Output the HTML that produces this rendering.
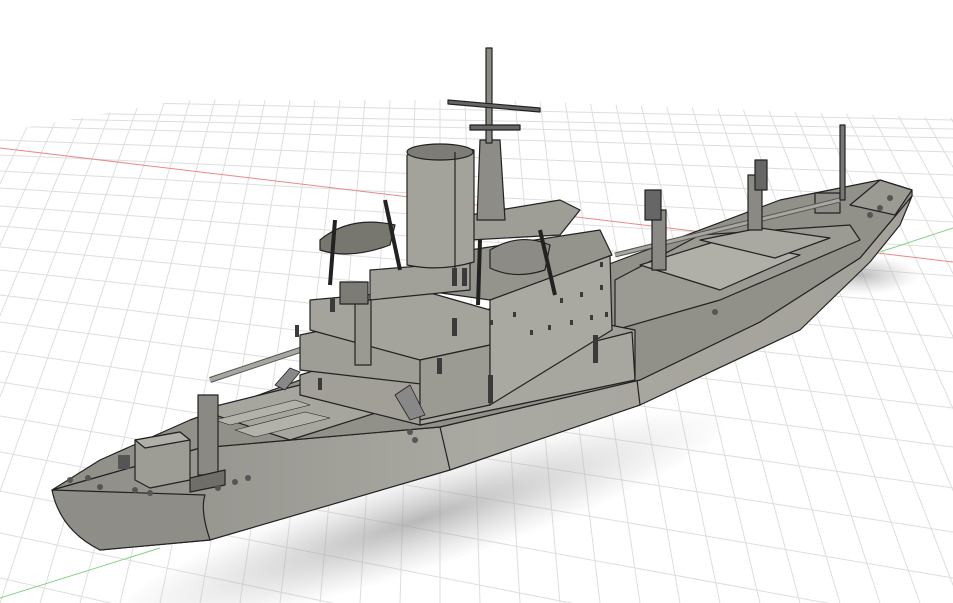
<!DOCTYPE html>
<html><head><meta charset="utf-8"><style>html,body{margin:0;padding:0;background:#fff;overflow:hidden;width:953px;height:603px}svg{display:block}</style></head><body>
<svg width="953" height="603" viewBox="0 0 953 603" xmlns="http://www.w3.org/2000/svg">
<defs>
<clipPath id="g"><polygon points="0,132 240,90 953,118 953,603 0,603"/></clipPath>
<radialGradient id="sh" cx="0.5" cy="0.5" r="0.5"><stop offset="0" stop-color="#9a9a9a" stop-opacity="0.7"/><stop offset="1" stop-color="#bbb" stop-opacity="0"/></radialGradient>
<linearGradient id="hull" x1="0" y1="0" x2="1" y2="0"><stop offset="0" stop-color="#8d8c86"/><stop offset="0.5" stop-color="#aaa9a2"/><stop offset="1" stop-color="#a3a19a"/></linearGradient>
</defs>
<g clip-path="url(#g)" stroke="#dedede" stroke-width="1">
<g>
<line x1="0" y1="140" x2="953" y2="175"/><line x1="0" y1="155" x2="953" y2="198"/><line x1="0" y1="171" x2="953" y2="222"/><line x1="0" y1="188" x2="953" y2="248"/>
<line x1="0" y1="206" x2="953" y2="276"/><line x1="0" y1="226" x2="953" y2="306"/><line x1="0" y1="247" x2="953" y2="338"/><line x1="0" y1="270" x2="953" y2="372"/>
<line x1="0" y1="295" x2="953" y2="408"/><line x1="0" y1="322" x2="953" y2="447"/><line x1="0" y1="351" x2="953" y2="488"/><line x1="0" y1="382" x2="953" y2="532"/>
<line x1="0" y1="416" x2="953" y2="578"/><line x1="0" y1="452" x2="953" y2="626"/><line x1="0" y1="491" x2="953" y2="678"/><line x1="0" y1="533" x2="953" y2="734"/><line x1="0" y1="578" x2="953" y2="794"/>
<line x1="0" y1="118" x2="953" y2="138"/><line x1="0" y1="126" x2="953" y2="152"/><line x1="0" y1="100" x2="953" y2="120"/><line x1="0" y1="112" x2="953" y2="129"/>
</g>
<g>
<line x1="-200" y1="603" x2="40" y2="100"/><line x1="-120" y1="603" x2="90" y2="100"/><line x1="-40" y1="603" x2="140" y2="100"/><line x1="40" y1="603" x2="190" y2="100"/>
<line x1="120" y1="603" x2="240" y2="100"/><line x1="200" y1="603" x2="290" y2="100"/><line x1="280" y1="603" x2="340" y2="100"/><line x1="360" y1="603" x2="390" y2="100"/>
<line x1="440" y1="603" x2="440" y2="100"/><line x1="520" y1="603" x2="490" y2="100"/><line x1="600" y1="603" x2="540" y2="100"/><line x1="680" y1="603" x2="590" y2="100"/>
<line x1="760" y1="603" x2="640" y2="100"/><line x1="840" y1="603" x2="690" y2="100"/><line x1="920" y1="603" x2="740" y2="100"/><line x1="1000" y1="603" x2="790" y2="100"/>
<line x1="1080" y1="603" x2="840" y2="100"/><line x1="1160" y1="603" x2="890" y2="100"/><line x1="1240" y1="603" x2="940" y2="100"/>
<line x1="-160" y1="603" x2="65" y2="100"/><line x1="-80" y1="603" x2="115" y2="100"/><line x1="0" y1="603" x2="165" y2="100"/><line x1="80" y1="603" x2="215" y2="100"/>
<line x1="160" y1="603" x2="265" y2="100"/><line x1="240" y1="603" x2="315" y2="100"/><line x1="320" y1="603" x2="365" y2="100"/><line x1="400" y1="603" x2="415" y2="100"/>
<line x1="480" y1="603" x2="465" y2="100"/><line x1="560" y1="603" x2="515" y2="100"/><line x1="640" y1="603" x2="565" y2="100"/><line x1="720" y1="603" x2="615" y2="100"/>
<line x1="800" y1="603" x2="665" y2="100"/><line x1="880" y1="603" x2="715" y2="100"/><line x1="960" y1="603" x2="765" y2="100"/><line x1="1040" y1="603" x2="815" y2="100"/><line x1="1120" y1="603" x2="865" y2="100"/><line x1="1200" y1="603" x2="915" y2="100"/>
</g>
</g>
<line x1="0" y1="148" x2="953" y2="262" stroke="#e88a8a" stroke-width="1"/>
<line x1="0" y1="598" x2="160" y2="548" stroke="#8ad08a" stroke-width="1"/>
<line x1="880" y1="252" x2="953" y2="228" stroke="#8ad08a" stroke-width="1"/>
<ellipse cx="420" cy="520" rx="330" ry="50" fill="url(#sh)" transform="rotate(-18 420 520)"/>
<ellipse cx="860" cy="275" rx="60" ry="20" fill="url(#sh)"/>
<g stroke="#222" stroke-width="1.2" stroke-linejoin="round">
<polygon points="52,490 200,448 440,427 640,380 760,322 860,258 912,196 900,225 870,262 800,330 640,405 450,470 210,540 100,550 65,520" fill="url(#hull)"/>
<path d="M52,490 Q60,530 100,550 L210,540 Q200,510 205,495 Z" fill="#8e8d87"/>
<line x1="440" y1="427" x2="450" y2="470"/><line x1="637" y1="380" x2="640" y2="405"/>
<polygon points="52,490 100,460 190,420 300,380 620,260 780,200 880,180 912,190 912,196 860,258 760,322 640,380 440,427 200,448" fill="#929189"/>
<polygon points="880,180 912,190 895,215 850,205" fill="#9b9a93"/>
<polygon points="200,410 300,385 385,410 290,440" fill="#a6a59e"/>
<polygon points="215,420 295,400 310,405 230,425" fill="#b2b1aa" stroke-width="0.6"/>
<polygon points="235,430 305,412 330,418 255,437" fill="#b2b1aa" stroke-width="0.6"/>
<polygon points="135,440 180,432 190,440 190,480 150,488 135,480" fill="#9d9c95"/>
<polygon points="135,440 180,432 190,440 145,448" fill="#b0afa8"/>
<rect x="198" y="395" width="20" height="80" fill="#8a8983"/>
<polygon points="190,478 225,470 225,485 190,492" fill="#6f6e68"/>
<path d="M210,380 L360,330" stroke-width="6" stroke="#555"/>
<path d="M210,380 L360,330" stroke-width="4" stroke="#a7a69f"/>
<polygon points="615,280 700,235 850,225 860,240 720,300 615,330" fill="#9b9a93"/>
<polygon points="640,265 720,240 800,255 720,290" fill="#b0afa8"/>
<polygon points="700,240 760,228 830,238 775,258" fill="#a9a8a1"/>
<rect x="815" y="193" width="25" height="20" fill="#8f8e88"/>
<path d="M615,255 L840,200" stroke="#555" stroke-width="5"/><path d="M615,255 L840,200" stroke="#a7a69f" stroke-width="3"/>
<rect x="652" y="210" width="14" height="60" fill="#8a8983"/>
<rect x="748" y="175" width="14" height="55" fill="#8a8983"/>
<rect x="755" y="160" width="12" height="30" fill="#666"/>
<rect x="645" y="190" width="16" height="30" fill="#666"/>
<rect x="840" y="125" width="5" height="75" fill="#777"/>
<polygon points="300,375 380,350 560,355 610,325 635,330 635,380 420,425 300,395" fill="#a19f98"/>
<polygon points="420,385 632,332 635,380 420,425" fill="#a8a79f"/>
<polygon points="300,335 380,318 430,345 430,385 300,370" fill="#9e9d96"/>
<polygon points="310,300 420,290 490,310 490,345 420,360 310,330" fill="#a5a49c"/>
<polygon points="420,360 490,345 490,405 420,420" fill="#9b9a93"/>
<polygon points="490,300 610,255 612,330 490,405" fill="#a9a8a1"/>
<polygon points="470,250 600,230 612,255 490,300 420,290" fill="#94938c"/>
<polygon points="370,270 470,262 470,290 370,300" fill="#a2a199"/>
<polygon points="470,215 560,200 580,210 560,235 470,240" fill="#9e9d96"/>
<path d="M407,155 Q440,142 474,150 L474,262 Q440,272 407,265 Z" fill="#a4a39b"/>
<ellipse cx="440" cy="152" rx="33" ry="8" fill="#7d7c76"/>
<line x1="455" y1="152" x2="455" y2="268"/>
<polygon points="480,140 500,140 505,220 477,220" fill="#8d8c86"/>
<rect x="486" y="48" width="6" height="95" fill="#8a8983"/>
<polygon points="448,100 540,108 540,112 448,104" fill="#666"/>
<rect x="470" y="125" width="50" height="5" fill="#666"/>
<path d="M320,240 Q350,215 395,225 L390,245 Q350,260 320,250 Z" fill="#77766f"/>
<path d="M490,250 Q520,232 550,245 L545,270 Q515,280 490,268 Z" fill="#8c8b85"/>
<path d="M335,220 L330,285 M385,200 L400,270 M480,240 L478,305 M540,230 L555,295" stroke-width="4"/>
<g fill="#3a3a3a" stroke="none">
<rect x="452" y="268" width="5" height="18"/><rect x="462" y="268" width="5" height="18"/>
<rect x="452" y="318" width="5" height="18"/><rect x="330" y="298" width="5" height="14"/><rect x="437" y="358" width="5" height="16"/>
<rect x="488" y="375" width="5" height="28"/><rect x="593" y="335" width="5" height="28"/>
<rect x="490" y="320" width="3" height="5"/><rect x="513" y="312" width="3" height="5"/><rect x="530" y="330" width="3" height="5"/><rect x="548" y="325" width="3" height="5"/>
<rect x="560" y="298" width="3" height="5"/><rect x="580" y="292" width="3" height="5"/><rect x="600" y="262" width="3" height="5"/><rect x="600" y="285" width="3" height="5"/>
<rect x="570" y="320" width="3" height="5"/><rect x="590" y="315" width="3" height="5"/><rect x="605" y="312" width="3" height="5"/>
<rect x="318" y="378" width="4" height="12"/><rect x="295" y="325" width="4" height="12"/>
</g>
<rect x="355" y="300" width="16" height="65" fill="#9a9992"/>
<rect x="340" y="282" width="28" height="22" fill="#7c7b75"/>
<polygon points="395,395 410,385 425,415 410,420" fill="#888" stroke-width="0.8"/>
<polygon points="275,385 290,368 300,372 285,390" fill="#888" stroke-width="0.8"/>
<g fill="#555" stroke="none">
<circle cx="70" cy="480" r="3"/><circle cx="88" cy="478" r="3"/><circle cx="100" cy="487" r="3"/><circle cx="135" cy="490" r="3"/><circle cx="150" cy="493" r="3"/>
<circle cx="235" cy="482" r="3"/><circle cx="248" cy="478" r="3"/><circle cx="218" cy="488" r="3"/><circle cx="410" cy="432" r="3"/><circle cx="415" cy="440" r="3"/>
<circle cx="715" cy="312" r="3"/><circle cx="880" cy="208" r="3"/><circle cx="890" cy="198" r="3"/><circle cx="870" cy="215" r="3"/>
<rect x="118" y="455" width="12" height="14"/>
</g>
</g>
</svg>
</body></html>
